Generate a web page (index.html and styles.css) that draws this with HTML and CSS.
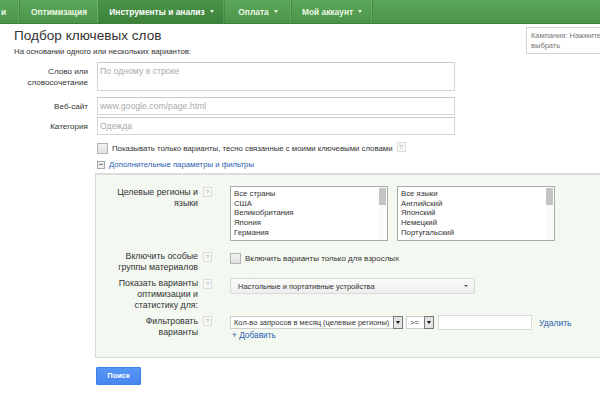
FILE: index.html
```html
<!DOCTYPE html>
<html lang="ru">
<head>
<meta charset="utf-8">
<title>Подбор ключевых слов</title>
<link rel="stylesheet" href="styles.css">
</head>
<body>
<nav class="topnav">
  <div class="nav-item w1">и</div>
  <div class="nav-item w2">Оптимизация</div>
  <div class="nav-item w3 active">Инструменты и анализ <span class="caret"></span></div>
  <div class="nav-item w4">Оплата <span class="caret"></span></div>
  <div class="nav-item w5">Мой аккаунт <span class="caret"></span></div>
  <div class="nav-fill"></div>
</nav>

<header class="head">
  <div class="head-text">
    <h1 class="title">Подбор ключевых слов</h1>
    <p class="subtitle">На основании одного или нескольких вариантов:</p>
  </div>
  <div class="campaign">Кампания: Нажмите<br>выбрать</div>
</header>

<section class="form">
  <div class="row row-words">
    <div class="label">Слово или<br>словосочетание</div>
    <div class="field"><div class="textarea"><span class="ph">По одному в строке</span></div></div>
  </div>
  <div class="row row-site">
    <div class="label">Веб-сайт</div>
    <div class="field"><div class="input"><span class="ph">www.google.com/page.html</span></div></div>
  </div>
  <div class="row row-cat">
    <div class="label">Категория</div>
    <div class="field"><div class="input"><span class="ph">Одежда</span></div></div>
  </div>
  <div class="row row-check">
    <div class="label"></div>
    <div class="field inline">
      <span class="checkbox"></span>
      <span class="check-text">Показывать только варианты, тесно связанные с моими ключевыми словами</span>
      <span class="help">?</span>
    </div>
  </div>
  <div class="row row-more">
    <div class="label"></div>
    <div class="field inline">
      <span class="minus"></span>
      <a class="link more-link">Дополнительные параметры и фильтры</a>
    </div>
  </div>
</section>

<section class="panel">
  <div class="prow prow-loc">
    <div class="plabel">Целевые регионы и<br>языки</div>
    <span class="help phelp">?</span>
    <div class="pfield lists">
      <div class="listbox lb-countries">
        <div class="lb-items">
          <div>Все страны</div><div>США</div><div>Великобритания</div><div>Япония</div><div>Германия</div><div>Франция</div>
        </div>
        <div class="lb-scroll"><div class="lb-thumb"></div></div>
      </div>
      <div class="listbox lb-langs">
        <div class="lb-items">
          <div>Все языки</div><div>Английский</div><div>Японский</div><div>Немецкий</div><div>Португальский</div>
        </div>
        <div class="lb-scroll"><div class="lb-thumb"></div></div>
      </div>
    </div>
  </div>
  <div class="prow prow-adult">
    <div class="plabel">Включить особые<br>группы материалов</div>
    <span class="help phelp">?</span>
    <div class="pfield inline">
      <span class="checkbox"></span>
      <span class="small-text">Включить варианты только для взрослых</span>
    </div>
  </div>
  <div class="prow prow-device">
    <div class="plabel">Показать варианты<br>оптимизации и<br>статистику для:</div>
    <span class="help phelp">?</span>
    <div class="pfield">
      <div class="select-big"><span>Настольные и портативные устройства</span><span class="tri"></span></div>
    </div>
  </div>
  <div class="prow prow-filter">
    <div class="plabel">Фильтровать<br>варианты</div>
    <span class="help phelp">?</span>
    <div class="pfield">
      <div class="filter-line">
        <div class="sel sel-metric"><span class="sel-text">Кол-во запросов в месяц (целевые регионы)</span><span class="sel-btn"><span class="tri-dark"></span></span></div>
        <div class="sel sel-op"><span class="sel-text">&gt;=</span><span class="sel-btn"><span class="tri-dark"></span></span></div>
        <div class="num-input"></div>
        <a class="link del-link">Удалить</a>
      </div>
      <a class="link add-link">+ Добавить</a>
    </div>
  </div>
</section>

<div class="actions">
  <button class="btn-search">Поиск</button>
</div>
</body>
</html>
```

FILE: styles.css
```css
html, body {
  margin: 0;
  padding: 0;
}
body {
  width: 600px;
  height: 393px;
  overflow: hidden;
  background: #fff;
  font-family: "Liberation Sans", Arial, sans-serif;
  color: #333;
}

/* top navigation */
.topnav {
  display: flex;
  height: 24px;
  background: linear-gradient(#5ba75a, #4b9549);
  border-bottom: 1px solid #3f7f3d;
  box-sizing: border-box;
}
.nav-item {
  display: flex;
  align-items: center;
  justify-content: center;
  box-sizing: border-box;
  color: #eef8e6;
  font-size: 8.4px;
  font-weight: bold;
  border-right: 1px solid #468a44;
  box-shadow: inset -2px 0 0 -1px rgba(255,255,255,0.12);
  white-space: nowrap;
}
.nav-item.w1 { width: 20px; justify-content: flex-start; padding-left: 1px; }
.nav-item.w2 { width: 79px; }
.nav-item.w3 { width: 126px; }
.nav-item.w4 { width: 67px; }
.nav-item.w5 { width: 81px; }
.nav-item.active {
  background: linear-gradient(#4a9448, #3c823b);
  color: #fff;
}
.nav-fill { flex: 1; }
.caret {
  display: inline-block;
  width: 0;
  height: 0;
  margin-left: 5px;
  border-left: 2.5px solid transparent;
  border-right: 2.5px solid transparent;
  border-top: 3px solid #e8f3e4;
}

/* header */
.head {
  display: flex;
  justify-content: space-between;
  align-items: flex-start;
}
.head-text { padding-left: 14px; }
.title {
  margin: 5px 0 0;
  font-size: 13.6px;
  font-weight: normal;
  color: #333;
  line-height: 14px;
}
.subtitle {
  margin: 4px 0 0;
  font-size: 7.8px;
  line-height: 10px;
  color: #333;
}
.campaign {
  margin-top: 3px;
  width: 74px;
  height: 27px;
  box-sizing: border-box;
  border: 1px solid #d3d3d3;
  border-right: none;
  padding: 3px 0 3px 4px;
  font-size: 7.5px;
  line-height: 10px;
  color: #777;
  white-space: nowrap;
  overflow: hidden;
}

/* main form */
.form { margin-top: 5px; }
.row {
  display: flex;
  align-items: flex-start;
}
.label {
  width: 88px;
  flex: none;
  text-align: right;
  font-size: 8.1px;
  line-height: 11px;
  color: #333;
}
.field {
  margin-left: 9px;
  width: 358px;
}
.field.inline {
  display: flex;
  align-items: center;
}
.textarea, .input {
  box-sizing: border-box;
  border: 1px solid #d6d6d6;
  border-top-color: #c8c8c8;
  background: #fff;
  font-size: 8.7px;
  padding: 3px 2px;
}
.textarea { height: 29px; }
.input { height: 18px; padding-top: 3px; }
.ph { color: #aaa; }
.row-words .label { padding-top: 4px; }
.row-site { margin-top: 6px; }
.row-site .label, .row-cat .label { padding-top: 4px; }
.row-cat { margin-top: 2px; }
.row-check { margin-top: 8px; height: 11px; }
.row-more { margin-top: 6px; height: 11px; }

.checkbox {
  display: inline-block;
  width: 9px;
  height: 9px;
  border: 1px solid #b4b4b4;
  background: linear-gradient(#f0f0f0, #e2e2e2);
  flex: none;
}
.check-text {
  margin-left: 4px;
  font-size: 7.8px;
  color: #333;
  white-space: nowrap;
}
.help {
  display: inline-block;
  width: 7px;
  height: 8px;
  border: 1px solid #dcdcdc;
  background: #f7f7f7;
  font-size: 6px;
  line-height: 8px;
  text-align: center;
  color: #b0b0b0;
  flex: none;
}
.row-check .help { margin-left: 4px; margin-top: -4px; }
.minus {
  position: relative;
  display: inline-block;
  width: 6px;
  height: 6px;
  border: 1px solid #aaa;
  background: #eee;
  flex: none;
}
.minus::after {
  content: "";
  position: absolute;
  left: 1px;
  right: 1px;
  top: 2px;
  height: 1px;
  background: #777;
}
.link {
  color: #2a5db0;
  cursor: pointer;
}
.more-link {
  margin-left: 4px;
  font-size: 7.8px;
  white-space: nowrap;
}

/* advanced panel */
.panel {
  margin: 2px 0 0 95px;
  width: 560px;
  height: 185px;
  box-sizing: border-box;
  background: #f3f8f1;
  border: 1px solid #d5d9d3;
  border-top: 2px solid #dcdcdc;
  padding-top: 11px;
}
.prow {
  display: flex;
  align-items: flex-start;
}
.plabel {
  width: 102px;
  flex: none;
  text-align: right;
  font-size: 8.8px;
  line-height: 11px;
  color: #333;
}
.phelp { margin-left: 5px; margin-top: 1px; }
.pfield { margin-left: 18px; }
.pfield.inline { display: flex; align-items: center; }

.lists { display: flex; gap: 9px; }
.listbox {
  position: relative;
  display: flex;
  width: 158px;
  height: 55px;
  box-sizing: border-box;
  border: 1px solid #a9a9a9;
  background: #fff;
  overflow: hidden;
}
.lb-items {
  flex: 1;
  padding: 2px 3px;
  font-size: 7.75px;
  line-height: 9.7px;
  color: #333;
}
.lb-scroll {
  width: 7px;
  background: #fafafa;
  margin-right: 1px;
}
.lb-thumb {
  margin-top: 1px;
  height: 17px;
  background: #c4c4c4;
}
.prow-loc .plabel { padding-top: 1px; }
.prow-adult { margin-top: 10px; }
.prow-adult .pfield { margin-top: 2px; }
.small-text {
  margin-left: 4px;
  font-size: 8px;
  color: #333;
  white-space: nowrap;
}
.prow-device { margin-top: 5px; }
.select-big {
  display: flex;
  justify-content: space-between;
  align-items: center;
  width: 245px;
  height: 16px;
  box-sizing: border-box;
  border: 1px solid #dadada;
  border-radius: 2px;
  background: linear-gradient(#fafafa, #eeeeee);
  padding: 0 6px 0 7px;
  font-size: 7.5px;
  color: #333;
}
.tri {
  width: 0;
  height: 0;
  border-left: 2px solid transparent;
  border-right: 2px solid transparent;
  border-top: 2.5px solid #555;
}
.prow-filter { margin-top: 4px; }
.prow-filter .plabel { padding-top: 1px; }
.filter-line {
  display: flex;
  align-items: center;
}
.sel {
  display: flex;
  align-items: stretch;
  height: 13px;
  box-sizing: border-box;
  border: 1px solid #d0d0d0;
  background: #fff;
  font-size: 7.5px;
}
.sel-text {
  flex: 1;
  padding-left: 3px;
  line-height: 11px;
  white-space: nowrap;
  overflow: hidden;
  color: #333;
}
.sel-metric { width: 173px; }
.sel-op { width: 28px; margin-left: 3px; }
.sel-btn {
  width: 10px;
  box-sizing: border-box;
  border: 1px solid #7a7a7a;
  background: #e4e4e4;
  display: flex;
  align-items: center;
  justify-content: center;
  margin: -1px -1px -1px 0;
  flex: none;
}
.tri-dark {
  width: 0;
  height: 0;
  border-left: 2.5px solid transparent;
  border-right: 2.5px solid transparent;
  border-top: 3px solid #111;
}
.num-input {
  margin-left: 4px;
  width: 94px;
  height: 15px;
  box-sizing: border-box;
  border: 1px solid #dadada;
  background: #fff;
}
.del-link {
  margin-left: 7px;
  font-size: 8.5px;
}
.add-link {
  display: block;
  margin-left: 2px;
  font-size: 8.3px;
  line-height: 11px;
}

/* actions */
.actions { margin: 6px 0 0 96px; }
.btn-search {
  width: 45px;
  height: 18px;
  border: 1px solid #3c7fe6;
  border-radius: 1px;
  background: linear-gradient(#5596f6, #4787ed);
  color: #fff;
  font-family: "Liberation Sans", Arial, sans-serif;
  font-size: 7.5px;
  font-weight: bold;
  padding: 0;
}
```
